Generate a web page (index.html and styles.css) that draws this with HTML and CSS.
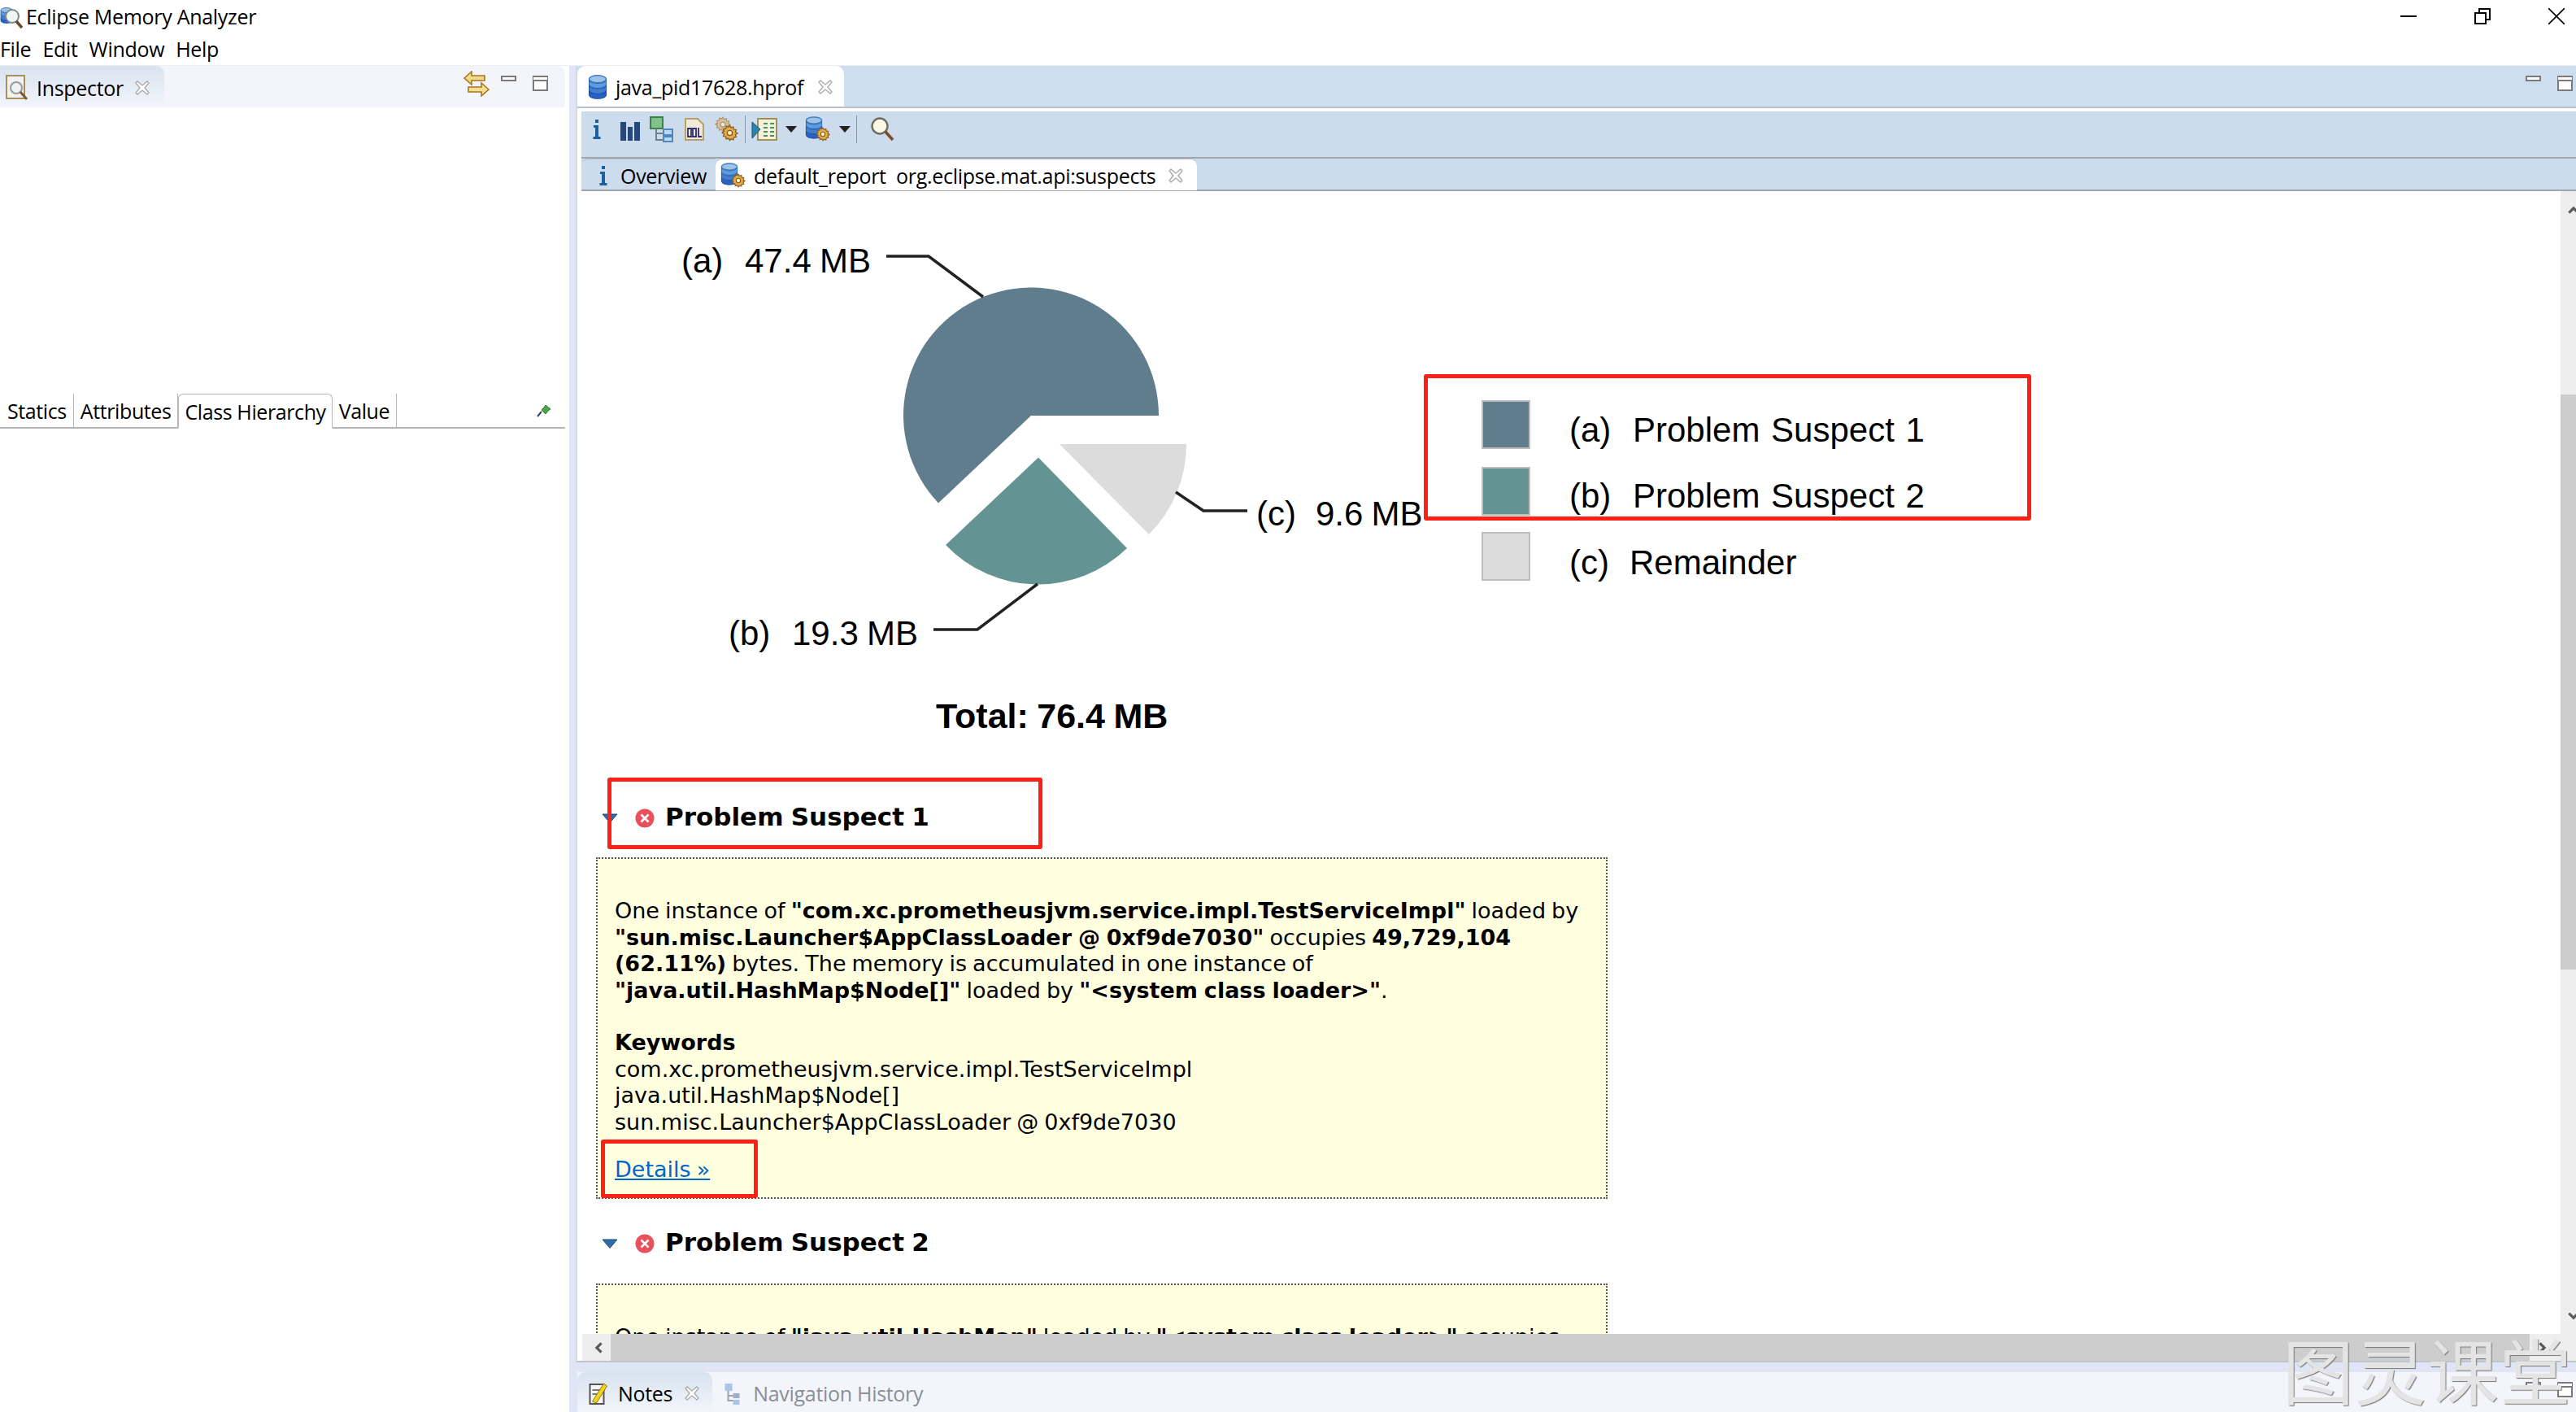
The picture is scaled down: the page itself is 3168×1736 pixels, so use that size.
FILE: index.html
```html
<!DOCTYPE html>
<html lang="en">
<head>
  <meta charset="UTF-8" />
  <title>Eclipse Memory Analyzer</title>
  <link rel="stylesheet" href="styles.css">
</head>
<body>

  <svg class="defs" width="0" height="0">
    <defs>
      <symbol id="disks" viewBox="0 0 16 20">
        <ellipse cx="8" cy="3.500" rx="7" ry="3" fill="#9cc3e6" stroke="#3f7fc4"/>
        <path d="M1 4v4c0 1.600 3 3 7 3s7-1.400 7-3V4c0 1.600-3 3-7 3S1 5.600 1 4z" fill="#5d9bdc" stroke="#2a66b8" stroke-width=".7"/>
        <path d="M1 8.500v4c0 1.600 3 3 7 3s7-1.400 7-3v-4c0 1.600-3 3-7 3s-7-1.400-7-3z" fill="#3f7fd0" stroke="#1f56ad" stroke-width=".7"/>
        <path d="M1 13v3.500c0 1.600 3 3 7 3s7-1.400 7-3V13c0 1.600-3 3-7 3s-7-1.400-7-3z" fill="#2a62c4" stroke="#1a48a0" stroke-width=".7"/>
      </symbol>
      <symbol id="gear" viewBox="0 0 16 16">
        <path d="M8 1l1.200 2 2.200-.7.300 2.300 2.300.3-.7 2.200 2 1.200-2 1.200.7 2.200-2.300.3-.3 2.300-2.200-.7L8 15l-1.200-2-2.200.7-.3-2.300-2.300-.3.7-2.200-2-1.200 2-1.200-.7-2.200 2.300-.3.300-2.300 2.200.7z" fill="#e2b04a" stroke="#8a5a1c"/>
        <circle cx="8" cy="8" r="2.400" fill="#fff3c4" stroke="#8a5a1c"/>
      </symbol>
      <symbol id="dbgear" viewBox="0 0 32 32">
        <use href="#disks" x="0" y="0" width="22" height="28"/>
        <use href="#gear" x="13" y="13" width="18" height="18"/>
      </symbol>
      <symbol id="close" viewBox="0 0 20 20">
        <path d="M2 4l2-2 6 5 6-5 2 2-5 6 5 6-2 2-6-5-6 5-2-2 5-6z" fill="#fff" stroke="#a9a9a9" stroke-width="1.300"/>
      </symbol>
      <symbol id="err" viewBox="0 0 24 24">
        <circle cx="12" cy="12" r="11.500" fill="#e8505b"/>
        <path d="M7.500 7.500l9 9m0-9l-9 9" stroke="#fff" stroke-width="2.600" fill="none"/>
      </symbol>
      <symbol id="twisty" viewBox="0 0 20 12">
        <path d="M1 1h18L10 11.500z" fill="#2f6da4" stroke="#1d4d7d"/>
      </symbol>
      <symbol id="info" viewBox="0 0 12 24">
        <path d="M4 0h4v4H4zM2 7h6v14h2.500v3h-9v-3H4V10H2z" fill="#1d5e9c"/>
      </symbol>
      <symbol id="chev" viewBox="0 0 16 16">
        <path d="M2 11l6-6 6 6-2 2-4-4-4 4z" fill="#5a5a5a"/>
      </symbol>
    </defs>
  </svg>

  <header class="titlebar">
    <svg class="app-icon" viewBox="0 0 28 32">
      <use href="#disks" width="16" height="28" y="1"/>
      <circle cx="15" cy="16" r="8" fill="#eef6f6" stroke="#7d8a8a" stroke-width="2"/>
      <path d="M20 22l7 8" stroke="#6b4a2c" stroke-width="3.500"/>
    </svg>
    <span class="app-title">Eclipse Memory Analyzer</span>
    <div class="win-controls">
      <svg viewBox="0 0 20 20"><path d="M0 10h20" stroke="#000" stroke-width="2"/></svg>
      <svg viewBox="0 0 20 20"><path d="M1 6h13v13H1zM6 6V1h13v13h-5" fill="none" stroke="#000" stroke-width="2"/></svg>
      <svg viewBox="0 0 20 20"><path d="M0 0l20 20M20 0L0 20" stroke="#000" stroke-width="1.600"/></svg>
    </div>
  </header>

  <nav class="menubar">
    <a>File</a>
    <a>Edit</a>
    <a>Window</a>
    <a>Help</a>
  </nav>

  <div class="workbench">

    <aside class="left-pane">
      <div class="view-head">
        <div class="view-tab">
          <svg class="tab-icon" viewBox="0 0 28 32">
            <rect x="1" y="1" width="22" height="28" fill="#f1f1f1" stroke="#a98f5c" stroke-width="2"/>
            <circle cx="13" cy="16" r="7" fill="#eef2f2" stroke="#9a9a9a" stroke-width="2"/>
            <path d="M18 21l8 9" stroke="#7a5a3c" stroke-width="3"/>
          </svg>
          <span>Inspector</span>
          <svg class="tab-close"><use href="#close"/></svg>
        </div>
        <div class="view-actions">
          <svg class="swap-icon" viewBox="0 0 32 32">
            <path d="M1 9l9-8v5h16v6H10v5z" fill="#efd98b" stroke="#a9751d" stroke-width="1.600"/>
            <path d="M31 23l-9-8v5H6v6h16v5z" fill="#f3de92" stroke="#a9751d" stroke-width="1.600"/>
          </svg>
          <i class="min-btn"></i>
          <i class="max-btn"></i>
        </div>
      </div>

      <div class="inspector-body">
        <div class="sub-tabs">
          <span class="sub-tab">Statics</span>
          <span class="sub-tab">Attributes</span>
          <span class="sub-tab active">Class Hierarchy</span>
          <span class="sub-tab">Value</span>
          <svg class="pin" viewBox="0 0 18 16">
            <path d="M11 1l6 5-3 2-3 4-5-5 3-3z" fill="#4fa64a" stroke="#2d7a2d"/>
            <path d="M6 9l-5 6" stroke="#2b3f6b" stroke-width="2"/>
          </svg>
        </div>
      </div>
    </aside>

    <section class="right-col">
      <div class="editor">
        <div class="editor-tabs">
          <div class="editor-tab">
            <svg class="db-icon"><use href="#disks"/></svg>
            <span>java_pid17628.hprof</span>
            <svg class="tab-close"><use href="#close"/></svg>
          </div>
          <div class="view-actions">
            <i class="min-btn"></i>
            <i class="max-btn"></i>
          </div>
        </div>

        <div class="toolbar">
          <svg class="tool tool-i"><use href="#info"/></svg>
          <svg class="tool" viewBox="0 0 30 32">
            <path d="M4 7h7v23H4zM13 13h6v17h-6zM21 7h7v23h-7z" fill="#25497a"/>
          </svg>
          <svg class="tool" viewBox="0 0 30 32">
            <rect x="1" y="1" width="15" height="14" fill="#7cc48a" stroke="#3f7f4a" stroke-width="2"/>
            <path d="M8 15v14h8M8 21h8" fill="none" stroke="#6d7f90" stroke-width="2"/>
            <rect x="17" y="16" width="11" height="7" fill="#bcd7ee" stroke="#4f87bf" stroke-width="2"/>
            <rect x="17" y="25" width="11" height="6" fill="#bcd7ee" stroke="#4f87bf" stroke-width="2"/>
          </svg>
          <svg class="tool" viewBox="0 0 30 32">
            <path d="M4 3h15l7 7v19H4z" fill="#f1ead8" stroke="#b8a06c" stroke-width="2"/>
            <path d="M7 15h4v10H7zM13 15h4v10h-4zM20 14v11h4" fill="none" stroke="#2f2f6d" stroke-width="1.800"/>
          </svg>
          <svg class="tool" viewBox="0 0 30 32">
            <use href="#gear" x="0" y="0" width="20" height="20" opacity=".55"/>
            <use href="#gear" x="8" y="10" width="21" height="21"/>
          </svg>
          <i class="tool-sep"></i>
          <svg class="tool tool-wide" viewBox="0 0 32 30">
            <rect x="8" y="2" width="23" height="26" fill="#f4f1df" stroke="#a59150" stroke-width="2"/>
            <path d="M1 6l10 9-10 11z" fill="#2a86a8" stroke="#1d4d7d"/>
            <path d="M15 8h5m3 0h5M15 13h5m3 0h5M15 18h5m3 0h5M15 23h5m3 0h5" stroke="#3f9a5a" stroke-width="2"/>
          </svg>
          <i class="caret"></i>
          <svg class="tool tool-wide"><use href="#dbgear"/></svg>
          <i class="caret"></i>
          <i class="tool-sep"></i>
          <svg class="tool" viewBox="0 0 30 30">
            <circle cx="12" cy="11" r="9.500" fill="#fbf8e6" stroke="#6d6d60" stroke-width="2.400"/>
            <path d="M19 18l9 10" stroke="#7a4a2c" stroke-width="3.500"/>
          </svg>
        </div>

        <div class="page-tabs">
          <div class="page-tab">
            <svg class="tool-i"><use href="#info"/></svg>
            <span>Overview</span>
          </div>
          <div class="page-tab active">
            <svg class="db-gear"><use href="#dbgear"/></svg>
            <span>default_report&nbsp; org.eclipse.mat.api:suspects</span>
            <svg class="tab-close"><use href="#close"/></svg>
          </div>
        </div>

        <div class="editor-body">
          <div class="report">
            <svg class="chart" viewBox="716 235 1900 739" width="1900" height="739">
              <path d="M1268 511 L1425 511 A157 157 0 1 0 1154 618.500 Z" fill="#607d8e"/>
              <path d="M1277 562.500 L1163 670 A157 157 0 0 0 1386 674 Z" fill="#649393"/>
              <path d="M1303 546 L1459 546 A156 156 0 0 1 1413 657 Z" fill="#dcdcdc"/>
              <path class="leader" d="M1090 315H1142L1209 365M1276 718L1202 774H1148M1446 605L1480 628H1534"/>

              <text class="lbl" x="838" y="335">(a)</text>
              <text class="lbl" x="916" y="335">47.4 MB</text>
              <text class="lbl" x="896" y="793">(b)</text>
              <text class="lbl" x="974" y="793">19.3 MB</text>
              <text class="lbl" x="1545" y="646">(c)</text>
              <text class="lbl" x="1618" y="646">9.6 MB</text>
              <text class="lbl total" x="1151" y="895">Total: 76.4 MB</text>

              <rect class="swatch" x="1823" y="493" width="58" height="58" fill="#607d8e"/>
              <rect class="swatch" x="1823" y="575" width="58" height="58" fill="#649393"/>
              <rect class="swatch" x="1823" y="655" width="58" height="58" fill="#dcdcdc"/>
              <text class="lbl" x="1930" y="543">(a)</text>
              <text class="lbl legend" x="2008" y="543">Problem Suspect 1</text>
              <text class="lbl" x="1930" y="624">(b)</text>
              <text class="lbl legend" x="2008" y="624">Problem Suspect 2</text>
              <text class="lbl" x="1930" y="706">(c)</text>
              <text class="lbl legend" x="2004" y="706">Remainder</text>
            </svg>

            <div class="suspect-head">
              <svg class="twisty"><use href="#twisty"/></svg>
              <svg class="err"><use href="#err"/></svg>
              <h2>Problem Suspect 1</h2>
            </div>
            <div class="important">
              <p>One instance of <b>"com.xc.prometheusjvm.service.impl.TestServiceImpl"</b> loaded by <b>"sun.misc.Launcher$AppClassLoader @ 0xf9de7030"</b> occupies <b>49,729,104 (62.11%)</b> bytes. The memory is accumulated in one instance of <b>"java.util.HashMap$Node[]"</b> loaded by <b>"&lt;system class loader&gt;"</b>.</p>
              <p class="keywords"><b>Keywords</b><br>com.xc.prometheusjvm.service.impl.TestServiceImpl<br>java.util.HashMap$Node[]<br>sun.misc.Launcher$AppClassLoader @ 0xf9de7030</p>
              <a class="details">Details »</a>
            </div>

            <div class="suspect-head second">
              <svg class="twisty"><use href="#twisty"/></svg>
              <svg class="err"><use href="#err"/></svg>
              <h2>Problem Suspect 2</h2>
            </div>
            <div class="important">
              <p>One instance of <b>"java.util.HashMap"</b> loaded by <b>"&lt;system class loader&gt;"</b> occupies</p>
            </div>

            <!-- red marks drawn over the report -->
            <div class="mark mark-legend"></div>
            <div class="mark mark-head"></div>
            <div class="mark mark-details"></div>
          </div>

          <div class="vscroll">
            <svg class="chev"><use href="#chev"/></svg>
            <div class="thumb"></div>
            <svg class="chev down"><use href="#chev"/></svg>
          </div>
        </div>

        <div class="hscroll">
          <div class="hs-btn"><svg class="chev left"><use href="#chev"/></svg></div>
          <div class="hs-track"></div>
          <div class="hs-btn end"><svg class="chev right"><use href="#chev"/></svg></div>
        </div>
      </div>

      <div class="bottom-tabs">
        <div class="bottom-tab active">
          <svg class="tab-icon small" viewBox="0 0 24 28">
            <rect x="1" y="3" width="17" height="24" fill="#f4f4f4" stroke="#555" stroke-width="2"/>
            <path d="M4 10h10M4 15h8" stroke="#777" stroke-width="2"/>
            <path d="M4 24l14-22 4 3L9 26z" fill="#f2d21f" stroke="#8a7a10"/>
          </svg>
          <span>Notes</span>
          <svg class="tab-close"><use href="#close"/></svg>
        </div>
        <div class="bottom-tab muted">
          <svg class="tab-icon small" viewBox="0 0 24 28">
            <rect x="1" y="2" width="9" height="9" fill="#a9c6e8"/>
            <path d="M5 11v12h6M5 17h6" stroke="#9aa5b0" stroke-width="2" fill="none"/>
            <rect x="11" y="14" width="8" height="6" fill="#9db0c4"/>
            <rect x="11" y="22" width="8" height="6" fill="#a9c6e8"/>
          </svg>
          <span>Navigation History</span>
        </div>
        <div class="view-actions">
          <i class="min-btn"></i>
          <i class="max-btn"></i>
        </div>
      </div>
    </section>
  </div>

  <div class="watermark">图灵课堂</div>

</body>
</html>
```

FILE: styles.css
```css
body {
  margin: 0;
  width: 3168px;
  height: 1736px;
  overflow: hidden;
  position: relative;
  display: flex;
  flex-direction: column;
  background: #fff;
  color: #000;
  font-family: 'Open Sans', 'Noto Sans', sans-serif;
  font-size: 25px;
  letter-spacing: -0.3px;
}

.defs {
  position: absolute;
}

/* window chrome */

.titlebar {
  height: 40px;
  display: flex;
  align-items: center;
  flex-shrink: 0;
}

.app-icon {
  width: 28px;
  height: 32px;
  margin-right: 4px;
}

.win-controls {
  margin-left: auto;
  margin-right: 14px;
  display: flex;
  gap: 71px;
}

.win-controls svg {
  width: 20px;
  height: 20px;
}

.menubar {
  height: 40px;
  display: flex;
  align-items: center;
  gap: 14px;
  flex-shrink: 0;
}

.workbench {
  flex: 1;
  display: flex;
  min-height: 0;
  background: #e0e5f5;
  border-top: 1px solid #eee;
}

/* left side */

.left-pane {
  width: 700px;
  flex-shrink: 0;
  display: flex;
  flex-direction: column;
  background: #fff;
}

.view-head {
  height: 51px;
  margin-right: 5px;
  flex-shrink: 0;
  display: flex;
  background: #f3f5fb;
  border-radius: 0 10px 0 0;
}

.view-tab {
  width: 202px;
  display: flex;
  align-items: center;
  padding: 2px 0 0 7px;
  box-sizing: border-box;
  background: linear-gradient(#d8e3ef, #f3f5fb);
  border-radius: 0 10px 0 0;
}

.tab-icon {
  width: 28px;
  height: 32px;
  margin-right: 10px;
  flex-shrink: 0;
}

.tab-icon.small {
  width: 27px;
  height: 28px;
  margin-right: 10px;
}

.tab-close {
  width: 20px;
  height: 20px;
  margin-left: 13px;
  flex-shrink: 0;
}

.view-actions {
  margin-left: auto;
  display: flex;
  align-items: flex-start;
  padding-top: 12px;
  gap: 20px;
  padding-right: 21px;
}

.right-col .view-actions {
  padding-right: 4px;
}

.swap-icon {
  width: 32px;
  height: 32px;
  margin-top: -6px;
  margin-right: -6px;
}

.min-btn {
  display: block;
  width: 19px;
  height: 7px;
  box-sizing: border-box;
  border: 2px solid #7a7a7a;
  background: #fff;
}

.max-btn {
  display: block;
  width: 19px;
  height: 19px;
  box-sizing: border-box;
  border: 2px solid #7a7a7a;
  border-top-width: 7px;
  border-top-style: double;
  background: #fff;
}

.inspector-body {
  flex: 1;
  padding-top: 352px;
}

.sub-tabs {
  display: flex;
  align-items: flex-end;
  height: 41px;
  margin-right: 5px;
  border-bottom: 2px solid #b5b5b5;
}

.sub-tab {
  height: 41px;
  line-height: 42px;
  padding: 0 8px;
  border-right: 1px solid #b5b5b5;
  box-sizing: border-box;
  letter-spacing: -0.4px;
}

.sub-tab:first-child {
  padding-left: 9px;
}

.sub-tab.active {
  border: 1px solid #b5b5b5;
  border-bottom: 2px solid #fff;
  border-radius: 6px 6px 0 0;
  margin-bottom: -2px;
  height: 43px;
  padding: 0 7px;
}

.pin {
  width: 18px;
  height: 16px;
  margin-left: auto;
  margin-right: 17px;
  margin-bottom: 12px;
}

/* editor */

.right-col {
  flex: 1;
  min-width: 0;
  margin-left: 8px;
  display: flex;
  flex-direction: column;
}

.editor {
  flex: 1;
  min-height: 0;
  display: flex;
  flex-direction: column;
  background: #fff;
  border-left: 2px solid #d5d9e2;
  border-bottom: 2px solid #c0c4cc;
}

.editor-tabs {
  height: 50px;
  flex-shrink: 0;
  display: flex;
  background: #cfdeee;
  border-bottom: 2px solid #b4bfd0;
  box-sizing: content-box;
}

.editor-tab {
  width: 328px;
  display: flex;
  align-items: center;
  background: #fff;
  border-radius: 10px 10px 0 0;
  padding: 2px 0 0 13px;
  box-sizing: border-box;
}

.editor-tab .tab-close {
  margin-left: 17px;
}

.db-icon {
  width: 24px;
  height: 32px;
  margin-right: 10px;
}

.toolbar {
  margin: 4px 0 0 5px;
  height: 58px;
  flex-shrink: 0;
  display: flex;
  align-items: center;
  gap: 10px;
  padding: 0 0 12px 4px;
  background: #cddcec;
  border-bottom: 2px solid #9fa6b0;
  box-sizing: border-box;
}

.tool {
  width: 30px;
  height: 32px;
  flex-shrink: 0;
}

.tool-i {
  width: 14px;
  height: 24px;
  margin: 0 8px;
  flex-shrink: 0;
}

.tool-wide {
  width: 32px;
}

.tool-sep {
  width: 1px;
  height: 34px;
  margin: 0 -3px;
  background: #8a96a4;
}

.tool-sep:nth-last-child(2) {
  margin-right: 6px;
}

.caret {
  width: 0;
  height: 0;
  border-left: 7px solid transparent;
  border-right: 7px solid transparent;
  border-top: 8px solid #222;
}

.page-tabs {
  height: 40px;
  margin-left: 5px;
  flex-shrink: 0;
  display: flex;
  background: #cddcec;
  border-bottom: 2px solid #9fa6b0;
  box-sizing: border-box;
}

.page-tab {
  width: 165px;
  height: 39px;
  display: flex;
  align-items: center;
  box-sizing: border-box;
  padding: 2px 0 0 12px;
  border-top: 1px solid #b4bfd0;
  border-radius: 8px 0 0 0;
}

.page-tab.active {
  width: 592px;
  background: #fff;
  border-radius: 8px 8px 0 0;
  padding-left: 6px;
}

.page-tab .tool-i {
  margin: 0 14px 0 8px;
}

.page-tab .tab-close {
  margin-left: 15px;
}

.db-gear {
  width: 32px;
  height: 32px;
  margin-right: 9px;
}

.editor-body {
  flex: 1;
  min-height: 0;
  margin-left: 6px;
  display: flex;
}

.report {
  flex: 1;
  min-width: 0;
  position: relative;
  overflow: hidden;
  font-family: 'DejaVu Sans', sans-serif;
  font-size: 27px;
  letter-spacing: 0;
  word-spacing: -1.500px;
}

.chart {
  display: block;
}

.lbl {
  font-family: 'Liberation Sans', Arial, sans-serif;
  font-size: 42px;
}

.total {
  font-weight: bold;
  font-size: 43px;
}

.legend {
  word-spacing: 2px;
}

.leader {
  fill: none;
  stroke: #222;
  stroke-width: 3.500px;
}

.swatch {
  stroke: #bdbdbd;
  stroke-width: 2px;
}

.suspect-head {
  height: 60px;
  display: flex;
  align-items: center;
  margin-bottom: 20px;
  padding-left: 24px;
}

.suspect-head.second {
  margin-top: 23px;
  margin-bottom: 21px;
}

.twisty {
  width: 20px;
  height: 12px;
  margin-top: 4px;
  margin-right: 21px;
}

.err {
  width: 24px;
  height: 24px;
  margin-top: 4px;
  margin-right: 13px;
}

.suspect-head h2 {
  margin: 0;
  font-size: 31px;
  font-weight: bold;
}

.important {
  width: 1244px;
  height: 420px;
  margin-left: 17px;
  box-sizing: border-box;
  padding: 48px 20px 0 21px;
  background: #ffffe0;
  border: 2px dotted #555;
  line-height: 32.500px;
}

.important p {
  margin: 0;
}

.important .keywords {
  margin-top: 32px;
}

.details {
  display: block;
  margin-top: 26px;
  width: max-content;
  color: #0066cc;
  text-decoration: underline;
}

.mark {
  position: absolute;
  box-sizing: border-box;
  border: 5px solid #ff2015;
  border-radius: 3px;
}

.mark-legend {
  left: 1035px;
  top: 225px;
  width: 747px;
  height: 180px;
}

.mark-head {
  left: 31px;
  top: 721px;
  width: 535px;
  height: 88px;
}

.mark-details {
  left: 23px;
  top: 1166px;
  width: 193px;
  height: 72px;
}

/* scrollbars */

.vscroll {
  width: 19px;
  flex-shrink: 0;
  background: #eee;
  display: flex;
  flex-direction: column;
  overflow: hidden;
}

.chev {
  width: 18px;
  height: 18px;
  flex-shrink: 0;
}

.vscroll .chev {
  margin: 13px 0 0 7px;
}

.vscroll .chev.down {
  margin-top: auto;
  margin-bottom: 12px;
  transform: rotate(180deg);
}

.thumb {
  height: 707px;
  margin-top: 219px;
  background: #cdcdcd;
}

.hscroll {
  height: 33px;
  margin-left: 6px;
  flex-shrink: 0;
  display: flex;
}

.hs-btn {
  width: 35px;
  background: #eee;
  display: flex;
  align-items: center;
}

.hs-btn.end {
  width: 57px;
}

.hs-track {
  flex: 1;
  background: #cdcdcd;
}

.chev.left {
  transform: rotate(-90deg);
  margin-left: 10px;
}

.chev.right {
  transform: rotate(90deg);
  margin-left: 8px;
}

/* bottom tabs */

.bottom-tabs {
  height: 49px;
  margin: 12px 0 0 2px;
  flex-shrink: 0;
  display: flex;
  background: #f3f5fb;
}

.bottom-tab {
  display: flex;
  align-items: center;
  padding: 3px 15px 0 13px;
}

.bottom-tab.active {
  background: linear-gradient(#d8e3ef, #f3f5fb);
  border-radius: 10px 10px 0 0;
}

.bottom-tab .tab-close {
  margin-left: 14px;
}

.bottom-tab.muted {
  color: #8a8f98;
}

.watermark {
  position: absolute;
  right: 5px;
  bottom: 9px;
  font-family: 'Noto Sans CJK SC', sans-serif;
  font-size: 88px;
  line-height: 90px;
  font-weight: 400;
  letter-spacing: 1px;
  color: #e4e4e4;
  text-shadow: 1px 1px 1px #777;
}
```
